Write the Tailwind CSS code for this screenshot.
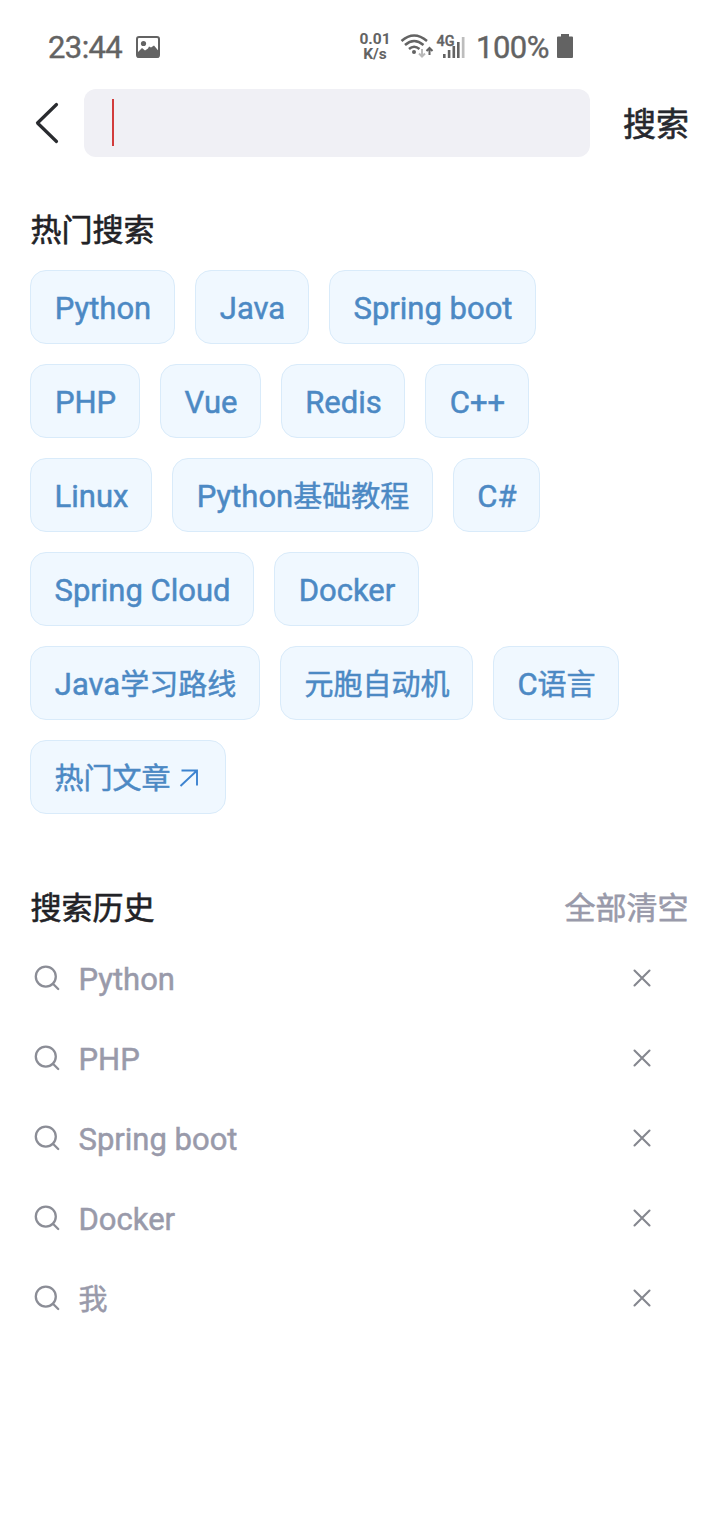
<!DOCTYPE html>
<html lang="zh-CN">
<head>
<meta charset="utf-8">
<title>搜索</title>
<script src="https://cdn.jsdelivr.net/npm/@tailwindcss/browser@4"></script>
</head>
<body class="bg-white">
<svg class="hidden">
  <symbol id="search" viewBox="0 0 28 28"><g fill="none" stroke="#8b8d96" stroke-width="2.3" stroke-linecap="round"><circle cx="11.800" cy="12.600" r="10"/><path d="M19.200 20l5 5"/></g></symbol>
  <symbol id="close" viewBox="0 0 20 20"><path d="M2.500 2.500l15 15M17.500 2.500l-15 15" fill="none" stroke="#85878f" stroke-width="2.100" stroke-linecap="round"/></symbol>
</svg>
<div class="w-[720px] h-[1520px] bg-white overflow-hidden font-[Roboto,'Noto_Sans_CJK_SC',sans-serif] whitespace-nowrap flex flex-col">
  <header class="h-[89px] shrink-0 pt-[30px] pl-[48px] flex items-start text-[#636363]">
    <span class="w-[88px] text-[31px] leading-[36px] tracking-[-0.6px] [-webkit-text-stroke:0.4px]">23:44</span>
    <svg class="mt-[6px]" width="24" height="22" viewBox="0 0 24 22"><rect x="1" y="1" width="22" height="20" rx="2" fill="none" stroke="#636363" stroke-width="2"/><circle cx="7.500" cy="7.500" r="2.600" fill="#636363"/><path d="M1 17l5-5 3 2.500 3-2 1-2 2 1 3-2 5 6v6H1z" fill="#636363"/></svg>
    <div class="ml-[199px] w-[32px] mt-[2px] text-[15.5px] leading-[15px] font-bold text-center flex flex-col items-center"><span>0.01</span><span>K/s</span></div>
    <svg class="ml-[9px] mt-[3px]" width="66" height="28" viewBox="0 0 66 28">
      <g fill="none" stroke="#636363" stroke-width="2.500"><path d="M1.500 8Q14 -3 27 8"/><path d="M5 12Q14 4 23.500 12"/><path d="M9 16Q14 11.500 19.500 16"/></g>
      <circle cx="14" cy="19" r="2" fill="#636363"/>
      <path d="M22 16v7M19 20.500l3 3 3-3" fill="none" stroke="#b9b9b9" stroke-width="2"/>
      <path d="M29.500 22v-6M26.500 18l3-3 3 3" fill="none" stroke="#636363" stroke-width="2"/>
      <text x="36.500" y="12.500" font-size="15" font-weight="500" fill="#636363" stroke="#636363" stroke-width="0.400" textLength="18" lengthAdjust="spacingAndGlyphs">4G</text>
      <g fill="#636363"><rect x="43" y="21" width="2.600" height="4"/><rect x="47.800" y="17" width="2.600" height="8"/><rect x="52.500" y="13" width="2.600" height="12"/><rect x="57" y="9" width="2.600" height="16"/></g><rect x="61.800" y="4" width="2.700" height="21" fill="#bdbdbd"/>
    </svg>
    <span class="ml-[10px] w-[81px] text-[31px] leading-[36px] tracking-[-0.5px] [-webkit-text-stroke:0.4px]">100%</span>
    <svg class="mt-[4px]" width="16" height="24" viewBox="0 0 16 24"><path d="M4 0h8v2.500h3q1 0 1 1V23q0 1-1 1H1q-1 0-1-1V3.500q0-1 1-1h3z" fill="#636363"/></svg>
  </header>

  <div class="h-[68px] shrink-0 flex items-center">
    <svg class="ml-[35px] w-[24px] h-[42px]" viewBox="0 0 24 42"><path d="M21.500 2.500L2.500 21l19 18.500" fill="none" stroke="#292b2f" stroke-width="3.200" stroke-linecap="round" stroke-linejoin="round"/></svg>
    <div class="ml-[25px] w-[506px] h-[68px] rounded-[12px] bg-[#f0f0f5] pl-[28px] pb-[1px] flex items-center"><div class="w-[2px] h-[47px] bg-[#d23c3c]"></div></div>
    <button class="ml-[33px] pt-[4px] text-[33px] leading-[48px] text-[#26282e] [-webkit-text-stroke:0.6px]">搜索</button>
  </div>

  <section class="px-[30px]">
    <h2 class="mt-[52px] pl-[0.5px] h-[44px] text-[31px] leading-[44px] text-[#222226] [-webkit-text-stroke:0.6px]">热门搜索</h2>
    <div class="mt-[17px] flex flex-col gap-[20px] text-[31px] text-[#4c89c4] [-webkit-text-stroke:0.5px] [&>div]:flex [&>div]:gap-[20px] [&>div>div]:h-[74px] [&>div>div]:rounded-[16px] [&>div>div]:border [&>div>div]:border-[#d9ebfa] [&>div>div]:bg-[#f0f8ff] [&>div>div]:flex [&>div>div]:items-center [&>div>div]:justify-center [&>div>div]:pt-[4px] [&>div>div]:pl-[1px] [&_i]:not-italic [&_i]:text-[29px] [&_i]:pt-[2px]">
      <div><div class="w-[145px]">Python</div><div class="w-[114px]">Java</div><div class="w-[207px]">Spring boot</div></div>
      <div><div class="w-[110px]">PHP</div><div class="w-[101px]">Vue</div><div class="w-[124px]">Redis</div><div class="w-[104px]">C++</div></div>
      <div><div class="w-[122px]">Linux</div><div class="w-[261px]">Python<i>基础教程</i></div><div class="w-[87px]">C#</div></div>
      <div><div class="w-[224px]">Spring Cloud</div><div class="w-[145px]">Docker</div></div>
      <div><div class="w-[230px]">Java<i>学习路线</i></div><div class="w-[193px]"><i>元胞自动机</i></div><div class="w-[126px]">C<i>语言</i></div></div>
      <div><div class="w-[196px]"><i>热门文章</i><svg class="ml-[8px] mr-[4px] mb-[2px]" width="20" height="20" viewBox="0 0 20 20"><path d="M2.500 2.500h15.500v15M18 2.500L1.500 18" fill="none" stroke="#3c83d0" stroke-width="1.900"/></svg></div></div>
    </div>
  </section>

  <section class="mt-[73px] px-[30px]">
    <div class="h-[44px] flex justify-between pl-[0.5px] pr-[1.5px] text-[31px] leading-[44px] [-webkit-text-stroke:0.6px]"><h2 class="text-[#222226]">搜索历史</h2><button class="text-[#999aaa]">全部清空</button></div>
    <ul class="mt-[7px] text-[31px] text-[#999aaa] [-webkit-text-stroke:0.5px] [&>li]:h-[80px] [&>li]:flex [&>li]:items-center [&>li]:pl-[4px] [&>li]:pr-[38px] [&_span]:ml-[16.5px] [&_span]:flex-1 [&_span]:pt-[4px]">
      <li><svg width="28" height="28"><use href="#search"/></svg><span>Python</span><svg width="20" height="20"><use href="#close"/></svg></li>
      <li><svg width="28" height="28"><use href="#search"/></svg><span>PHP</span><svg width="20" height="20"><use href="#close"/></svg></li>
      <li><svg width="28" height="28"><use href="#search"/></svg><span>Spring boot</span><svg width="20" height="20"><use href="#close"/></svg></li>
      <li><svg width="28" height="28"><use href="#search"/></svg><span>Docker</span><svg width="20" height="20"><use href="#close"/></svg></li>
      <li><svg width="28" height="28"><use href="#search"/></svg><span class="text-[29px] mt-[2px]">我</span><svg width="20" height="20"><use href="#close"/></svg></li>
    </ul>
  </section>
</div>
</body>
</html>
